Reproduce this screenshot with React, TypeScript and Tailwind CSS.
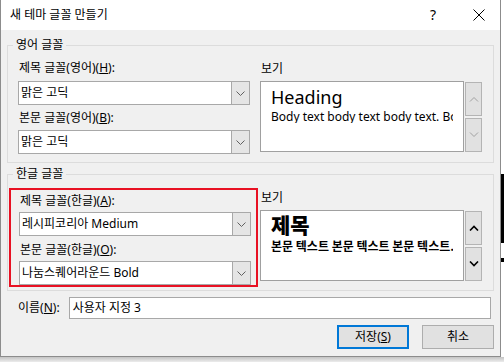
import React from 'react';

const font = { fontFamily: '"Noto Sans", "Noto Sans CJK KR", sans-serif' };

function Chevron({ up = false, dark = false }: { up?: boolean; dark?: boolean }) {
  return (
    <svg width="10" height="6" viewBox="0 0 10 6" className="block">
      <path
        d={up ? 'M1 5.5 L5 1.5 L9 5.5' : 'M1 0.5 L5 4.5 L9 0.5'}
        fill="none"
        stroke={dark ? '#000' : '#a0a0a0'}
        strokeWidth={dark ? 1.6 : 1}
      />
    </svg>
  );
}

function Combo({ value }: { value: string }) {
  return (
    <div className="flex h-[24px] w-[232px] border border-[#a8a8a8] bg-white">
      <div className="flex-1 flex items-center pl-[2px] text-[12px] text-black leading-none overflow-hidden whitespace-nowrap">
        {value}
      </div>
      <div className="w-[18px] flex items-center justify-center bg-[#e5e5e5] border-l border-[#a8a8a8]">
        <svg width="9" height="5" viewBox="0 0 9 5">
          <path d="M0.5 0.5 L4.5 4.5 L8.5 0.5" fill="none" stroke="#606060" strokeWidth="1" />
        </svg>
      </div>
    </div>
  );
}

function Label({ text, acc, after }: { text: string; acc: string; after?: string }) {
  return (
    <div className="text-[12px] leading-none text-black whitespace-nowrap">
      {text}(<u>{acc}</u>){after}
    </div>
  );
}

function Preview({ heading, body, korean }: { heading: string; body: string; korean?: boolean }) {
  return (
    <div className="flex flex-col">
      <div className="text-[12px] leading-none text-black pl-[1px]">보기</div>
      <div className="flex gap-[1px] mt-[6px]">
        <div className="w-[204px] h-[71px] border border-[#a0a0a0] bg-white overflow-hidden pl-[10px] pr-[10px]">
          {korean ? (
            <>
              <div className="text-[21px] font-black leading-none mt-[3px] text-black" style={{ fontFamily: '"Noto Sans CJK KR", sans-serif' }}>
                {heading}
              </div>
              <div className="text-[12px] font-bold leading-none mt-[5px] whitespace-nowrap overflow-hidden text-black" style={{ fontFamily: '"Noto Sans CJK KR", sans-serif' }}>
                {body}
              </div>
            </>
          ) : (
            <>
              <div className="text-[18px] leading-none mt-[6px] text-black">{heading}</div>
              <div className="text-[12px] leading-none mt-[5px] whitespace-nowrap overflow-hidden text-black">{body}</div>
            </>
          )}
        </div>
        <div className="flex flex-col gap-[2px] mt-[1px]">
          <div className="w-[17px] h-[34px] bg-[#e1e1e1] border border-[#b4b4b4] flex items-center justify-center">
            <Chevron up dark={korean} />
          </div>
          <div className="w-[17px] h-[34px] bg-[#e1e1e1] border border-[#b4b4b4] flex items-center justify-center">
            <Chevron dark={korean} />
          </div>
        </div>
      </div>
    </div>
  );
}

function GroupBox({ title, children, className }: { title: string; children: React.ReactNode; className: string }) {
  return (
    <div className={`relative border border-[#dcdcdc] ${className}`}>
      <div className="absolute -top-[8px] left-[5px] px-[3px] bg-[#f0f0f0] text-[12px] leading-[14px] text-black">
        {title}
      </div>
      {children}
    </div>
  );
}

export default function App() {
  return (
    <div className="w-[504px] h-[362px] bg-white relative overflow-hidden" style={font}>
      <div className="absolute left-[501px] top-[174px] w-[3px] h-[69px] bg-black" />
      <div className="absolute left-[501px] top-[258px] w-[3px] h-[4px] bg-black" />
      <div className="absolute left-0 top-[357px] w-[504px] h-[5px] bg-gradient-to-b from-[#c4c4c4] to-[#ececec]" />
      <div className="w-[501px] h-[357px] border border-[#8c8c8c] border-t-0 bg-[#f0f0f0] flex flex-col">
        <div className="h-[30px] bg-white flex items-center pl-[9px] pr-[15px]">
          <div className="text-[12px] text-black leading-none">새 테마 글꼴 만들기</div>
          <div className="flex-1" />
          <div className="text-[14px] text-black leading-none mr-[37px]">?</div>
          <svg width="12" height="12" viewBox="0 0 12 12">
            <path d="M0.5 0.5 L11.5 11.5 M11.5 0.5 L0.5 11.5" stroke="#000" strokeWidth="1" />
          </svg>
        </div>
        <div className="flex flex-col pl-[6px] pr-[6px]">
          <GroupBox title="영어 글꼴" className="mt-[15px] h-[118px] w-[487px] flex">
            <div className="flex flex-col pl-[11px] pt-[16px]">
              <Label text="제목 글꼴(영어)" acc="H" after=":" />
              <div className="mt-[7px] -ml-[1px]">
                <Combo value="맑은 고딕" />
              </div>
              <div className="mt-[7px]">
                <Label text="본문 글꼴(영어)" acc="B" after=":" />
              </div>
              <div className="mt-[6px] -ml-[1px]">
                <Combo value="맑은 고딕" />
              </div>
            </div>
            <div className="ml-[10px] pt-[17px]">
              <Preview heading="Heading" body="Body text body text body text. Body text" />
            </div>
          </GroupBox>
          <GroupBox title="한글 글꼴" className="mt-[11px] h-[117px] w-[487px] flex">
            <div className="mt-[13px] ml-[1px] w-[249px] h-[99px] border-2 border-[#e81123] flex flex-col pl-[9px] pt-[5px]">
              <Label text="제목 글꼴(한글)" acc="A" after=":" />
              <div className="mt-[5px] -ml-[1px]">
                <Combo value="레시피코리아 Medium" />
              </div>
              <div className="mt-[8px]">
                <Label text="본문 글꼴(한글)" acc="O" after=":" />
              </div>
              <div className="mt-[5px] -ml-[1px]">
                <Combo value="나눔스퀘어라운드 Bold" />
              </div>
            </div>
            <div className="ml-[2px] pt-[17px]">
              <Preview heading="제목" body="본문 텍스트 본문 텍스트 본문 텍스트." korean />
            </div>
          </GroupBox>
          <div className="flex items-center mt-[6px] ml-[11px]">
            <div className="text-[12px] leading-none text-black">
              이름(<u>N</u>):
            </div>
            <div className="ml-[9px] w-[422px] h-[22px] border border-[#a8a8a8] bg-white flex items-center pl-[3px] text-[12px] leading-none text-black">
              사용자 지정 3
            </div>
          </div>
          <div className="flex justify-end mt-[6px] mr-[0px] gap-[13px]">
            <div className="w-[72px] h-[24px] border-2 border-[#0078d7] bg-[#e1e1e1] flex items-center justify-center text-[12px] leading-none text-black">
              저장(<u>S</u>)
            </div>
            <div className="w-[72px] h-[24px] border border-[#adadad] bg-[#e1e1e1] flex items-center justify-center text-[12px] leading-none text-black">
              취소
            </div>
          </div>
        </div>
      </div>
    </div>
  );
}
